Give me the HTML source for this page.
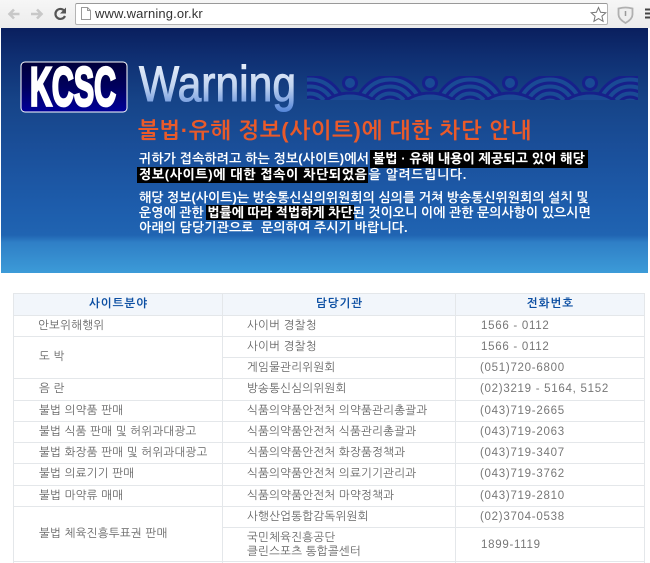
<!DOCTYPE html>
<html lang="ko"><head><meta charset="utf-8"><title>Warning</title>
<style>
html,body{margin:0;padding:0;background:#fff}
body{width:650px;height:563px;overflow:hidden;position:relative;font-family:"Liberation Sans","NanumGothic","Noto Sans CJK KR",sans-serif}
#bar{position:absolute;left:0;top:0;width:650px;height:28px;background:linear-gradient(#f6f6f6,#ececec)}
#url{position:absolute;left:75px;top:3px;width:531px;height:20px;background:#fff;border:1px solid #b4b4b4;border-top-color:#999;border-radius:2px}
#urlt{position:absolute;left:95px;top:6px;font-size:13px;line-height:16px;color:#333;letter-spacing:.14px}
#ban{position:absolute;left:1px;top:28px;width:647px;height:245px;background:linear-gradient(#0a1f5e 0,#0f2f72 12%,#164488 30%,#1a4f9a 50%,#1d5cab 72%,#2064b2 84.5%,#2f7fc6 87.500%,#3c9bd8 100%)}
.a{position:absolute;white-space:nowrap}
.t{color:#fff;font-weight:bold;font-size:13px;line-height:17px}
.t b{background:#000;padding:1px 3px 2px}
#ttl{left:138px;top:118px;font-size:22px;line-height:26px;font-weight:bold;color:#ea5a2a;letter-spacing:.72px}
.l{position:absolute;background:#e4e7ea}
.c{position:absolute;white-space:nowrap;font-size:11.5px;line-height:16px;color:#666;letter-spacing:.25px}
.p{letter-spacing:.72px;color:#777}
.h{position:absolute;white-space:nowrap;font-size:11.5px;line-height:16px;font-weight:bold;color:#0b4ea2;letter-spacing:1px;text-align:center}
</style></head><body>
<div id="bar"></div>
<svg class="a" style="left:0;top:0" width="75" height="28" viewBox="0 0 75 28">
<path d="M19.500 14H10M14 9.500 9.500 14l4.500 4.500" fill="none" stroke="#c8c8c8" stroke-width="2.600"/>
<path d="M31 14h10M37 9.500 41.500 14 37 18.500" fill="none" stroke="#c8c8c8" stroke-width="2.600"/>
<path d="M64.500 11A5 5 0 1 0 65 16" fill="none" stroke="#555" stroke-width="2.200"/>
<path d="M66 7.500v6h-6z" fill="#555"/>
</svg>
<div id="url"></div>
<svg class="a" style="left:81px;top:7px" width="10" height="13" viewBox="0 0 10 13"><path d="M.5.500h6l3 3v9H.5zM6.500.500v3h3" fill="#fff" stroke="#999"/></svg>
<div id="urlt" class="a">www.warning.or.kr</div>
<svg class="a" style="left:590px;top:6px" width="60" height="20" viewBox="0 0 60 20">
<path d="M8.500 1.500l2.100 4.800 5.200.500-3.900 3.400 1.200 5.100-4.600-2.700-4.600 2.700 1.200-5.100L1.200 6.800l5.200-.500z" fill="#fff" stroke="#777"/>
<path d="M28.500 2.500c2.800-.700 4.700-1 7-1s4.200.3 7 1v6c0 4-3.500 6.500-7 8.500-3.500-2-7-4.500-7-8.500z" fill="#eee" stroke="#b0b0b0" stroke-width="1.800"/>
<path d="M35.500 5v5" stroke="#999" stroke-width="1.500"/>
<path d="M55 3.500h5M55 7.500h5M55 11.500h5" stroke="#444" stroke-width="2"/>
</svg>
<div id="ban"></div>
<svg class="a" style="left:0;top:0" width="650" height="280" viewBox="0 0 650 280" font-family="Liberation Sans">
<defs>
<clipPath id="w"><rect x="307" y="76" width="331" height="24"/></clipPath>
<linearGradient id="lg" x1="0" y1="0" x2="0" y2="1"><stop offset="0" stop-color="#00003a"/><stop offset=".5" stop-color="#00005e"/><stop offset="1" stop-color="#00009a"/></linearGradient>
<linearGradient id="wg" gradientUnits="userSpaceOnUse" x1="0" y1="64" x2="0" y2="113"><stop offset="0" stop-color="#e6eefa"/><stop offset=".45" stop-color="#c2d4f0"/><stop offset="1" stop-color="#4f82d8"/></linearGradient>
</defs>
<rect x="21" y="62" width="106" height="50" rx="4" fill="url(#lg)" stroke="#fff"/>
<text transform="translate(30 105.500) scale(1 1.750)" font-size="31" font-weight="bold" fill="#fff" stroke="#fff" stroke-width="1.600" textLength="86" lengthAdjust="spacingAndGlyphs">KCSC</text>
<text x="139" y="101" font-size="50" fill="url(#wg)" stroke="url(#wg)" stroke-width="1" textLength="157" lengthAdjust="spacingAndGlyphs">Warning</text>
<g clip-path="url(#w)" fill="#1a4a95" stroke="#17208a" stroke-width="3">
<g>
<circle cx="310" cy="111" r="35"/><circle cx="310" cy="111" r="28"/><circle cx="310" cy="111" r="21"/><circle cx="310" cy="111" r="14"/>
<circle cx="390" cy="111" r="35"/><circle cx="390" cy="111" r="28"/><circle cx="390" cy="111" r="21"/><circle cx="390" cy="111" r="14"/>
<circle cx="470" cy="111" r="35"/><circle cx="470" cy="111" r="28"/><circle cx="470" cy="111" r="21"/><circle cx="470" cy="111" r="14"/>
<circle cx="550" cy="111" r="35"/><circle cx="550" cy="111" r="28"/><circle cx="550" cy="111" r="21"/><circle cx="550" cy="111" r="14"/>
<circle cx="630" cy="111" r="35"/><circle cx="630" cy="111" r="28"/><circle cx="630" cy="111" r="21"/><circle cx="630" cy="111" r="14"/>
</g>
<circle cx="350" cy="83" r="6.500"/><circle cx="430" cy="83" r="6.500"/><circle cx="510" cy="83" r="6.500"/><circle cx="590" cy="83" r="6.500"/>
<circle cx="350" cy="136" r="43"/><circle cx="430" cy="136" r="43"/><circle cx="510" cy="136" r="43"/><circle cx="590" cy="136" r="43"/>
</g>
</svg>
<div id="ttl" class="a">불법·유해 정보(사이트)에 대한 차단 안내</div>
<div class="a t" style="left:139px;top:150px;letter-spacing:.12px">귀하가 접속하려고 하는 정보(사이트)에서<b style="margin-left:1px">불법 · 유해 내용이 제공되고 있어 해당</b></div>
<div class="a t" style="left:137px;top:166px;letter-spacing:.64px"><b style="padding:0 1px 1px 2px">정보(사이트)에 대한 접속이 차단되었음</b>을 알려드립니다.</div>
<div class="a t" style="left:139px;top:189px">해당 정보(사이트)는 방송통신심의위원회의 심의를 거쳐 방송통신위원회의 설치 및</div>
<div class="a t" style="left:139px;top:204px">운영에 관한 <b style="padding:0 1px 0;margin:0 -1px">법률에 따라 적법하게 차단</b>된 것이오니 이에 관한 문의사항이 있으시면</div>
<div class="a t" style="left:139px;top:219px;letter-spacing:.1px">아래의 담당기관으로&nbsp; 문의하여 주시기 바랍니다.</div>

<div class="a" style="left:13px;top:293px;width:631px;height:22px;background:#f2f6fb"></div>
<div class="l" style="left:13px;top:293px;width:631px;height:1px"></div>
<div class="l" style="left:13px;top:315px;width:631px;height:1px"></div>
<div class="l" style="left:13px;top:336px;width:631px;height:1px"></div>
<div class="l" style="left:222px;top:357px;width:422px;height:1px"></div>
<div class="l" style="left:13px;top:378px;width:631px;height:1px"></div>
<div class="l" style="left:13px;top:400px;width:631px;height:1px"></div>
<div class="l" style="left:13px;top:421px;width:631px;height:1px"></div>
<div class="l" style="left:13px;top:442px;width:631px;height:1px"></div>
<div class="l" style="left:13px;top:463px;width:631px;height:1px"></div>
<div class="l" style="left:13px;top:485px;width:631px;height:1px"></div>
<div class="l" style="left:13px;top:506px;width:631px;height:1px"></div>
<div class="l" style="left:222px;top:527px;width:422px;height:1px"></div>
<div class="l" style="left:13px;top:561px;width:631px;height:1px"></div>
<div class="l" style="left:13px;top:293px;width:1px;height:270px"></div>
<div class="l" style="left:222px;top:293px;width:1px;height:270px"></div>
<div class="l" style="left:455px;top:293px;width:1px;height:270px"></div>
<div class="l" style="left:644px;top:293px;width:1px;height:270px"></div>

<div class="h" style="left:14px;top:296px;width:209px">사이트분야</div>
<div class="h" style="left:223px;top:296px;width:233px">담당기관</div>
<div class="h" style="left:456px;top:296px;width:189px">전화번호</div>

<div class="c" style="left:38px;top:318px">안보위해행위</div>
<div class="c" style="left:39px;top:349px">도 박</div>
<div class="c" style="left:39px;top:381px">음 란</div>
<div class="c" style="left:39px;top:403px">불법 의약품 판매</div>
<div class="c" style="left:39px;top:424px">불법 식품 판매 및 허위과대광고</div>
<div class="c" style="left:39px;top:445px">불법 화장품 판매 및 허위과대광고</div>
<div class="c" style="left:39px;top:466px">불법 의료기기 판매</div>
<div class="c" style="left:39px;top:488px">불법 마약류 매매</div>
<div class="c" style="left:39px;top:526px">불법 체육진흥투표권 판매</div>

<div class="c" style="left:247px;top:318px">사이버 경찰청</div>
<div class="c" style="left:247px;top:339px">사이버 경찰청</div>
<div class="c" style="left:247px;top:360px">게임물관리위원회</div>
<div class="c" style="left:247px;top:381px">방송통신심의위원회</div>
<div class="c" style="left:247px;top:403px">식품의약품안전처 의약품관리총괄과</div>
<div class="c" style="left:247px;top:424px">식품의약품안전처 식품관리총괄과</div>
<div class="c" style="left:247px;top:445px">식품의약품안전처 화장품정책과</div>
<div class="c" style="left:247px;top:466px">식품의약품안전처 의료기기관리과</div>
<div class="c" style="left:247px;top:488px">식품의약품안전처 마약정책과</div>
<div class="c" style="left:247px;top:509px">사행산업통합감독위원회</div>
<div class="c" style="left:247px;top:530px">국민체육진흥공단</div>
<div class="c" style="left:247px;top:544px">클린스포츠 통합콜센터</div>

<div class="c p" style="left:481px;top:318px">1566 - 0112</div>
<div class="c p" style="left:481px;top:339px">1566 - 0112</div>
<div class="c p" style="left:480px;top:360px">(051)720-6800</div>
<div class="c p" style="left:480px;top:381px">(02)3219 - 5164, 5152</div>
<div class="c p" style="left:480px;top:403px">(043)719-2665</div>
<div class="c p" style="left:480px;top:424px">(043)719-2063</div>
<div class="c p" style="left:480px;top:445px">(043)719-3407</div>
<div class="c p" style="left:480px;top:466px">(043)719-3762</div>
<div class="c p" style="left:480px;top:488px">(043)719-2810</div>
<div class="c p" style="left:480px;top:509px">(02)3704-0538</div>
<div class="c p" style="left:481px;top:537px">1899-1119</div>
</body></html>
